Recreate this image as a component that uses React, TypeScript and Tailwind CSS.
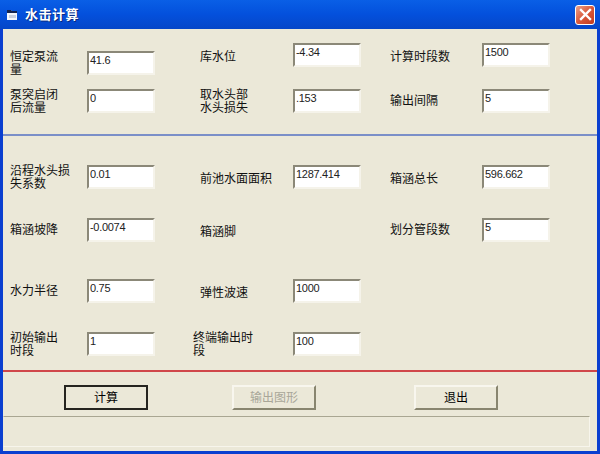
const FONT = "font-['Liberation_Sans','Noto_Sans_CJK_SC',sans-serif]";

function Field({ value }: { value: string }) {
  return (
    <div className="w-[68px] h-[24px] shrink-0 bg-white border-2 border-t-[#8b8878] border-l-[#8b8878] border-r-[#f5f3ea] border-b-[#f5f3ea] pl-[1px] text-[11px] leading-[15px] tracking-[-0.3px] text-[#222]">
      {value}
    </div>
  );
}

function Param({ label, value, width, labelClass = '' }: { label: string; value?: string; width: string; labelClass?: string }) {
  return (
    <div className="flex items-center h-[24px]">
      <div className={`${width} shrink-0 text-[12px] leading-[13px] text-[#111] whitespace-pre-line ${labelClass}`}>{label}</div>
      {value !== undefined && <Field value={value} />}
    </div>
  );
}

function Button({ text, kind }: { text: string; kind?: 'default' | 'disabled' }) {
  const frame =
    kind === 'default'
      ? 'border-2 border-[#25241f]'
      : 'border-2 border-t-[#f8f6ee] border-l-[#f8f6ee] border-r-[#88856f] border-b-[#88856f]';
  return (
    <div className={`w-[84px] h-[25px] flex items-center justify-center text-[12px] ${frame} ${kind === 'disabled' ? 'text-[#a8a698]' : 'text-black'}`}>
      {text}
    </div>
  );
}

const ROW = 'grid grid-cols-[190px_190px_1fr]';

export default function App() {
  return (
    <div className={`w-[600px] h-[454px] flex flex-col overflow-hidden bg-[#0a3fd0] ${FONT}`}>
      {/* title bar */}
      <div className="h-[29px] shrink-0 flex items-center pl-[7px] pr-[5px] bg-gradient-to-b from-[#0a5fe6] via-[#0450dc] to-[#0546c8]">
        <svg width="11" height="11" viewBox="0 0 11 11" className="shrink-0">
          <path d="M0 1h4l1 1h5v9H0z" fill="#f4f6fb" />
          <path d="M0 1h4l1 1h5v2H0z" fill="#14234f" />
          <path d="M2 6h7v3H2z" fill="#c9cfdf" />
        </svg>
        <div className="ml-[7px] text-[13px] font-bold text-white tracking-[0.5px] [text-shadow:1px_1px_0_#0a2a80]">水击计算</div>
        <div className="ml-auto w-[20px] h-[20px] rounded-[3px] border border-white bg-gradient-to-br from-[#e8a08a] via-[#d9583a] to-[#c23a1e] flex items-center justify-center">
          <svg width="13" height="13" viewBox="0 0 13 13">
            <path d="M2 2l9 9M11 2l-9 9" stroke="#fff" strokeWidth="2.4" strokeLinecap="square" />
          </svg>
        </div>
      </div>

      {/* client area */}
      <div className="flex-1 mx-[3px] mb-[3px] bg-[#ebe8d8] flex flex-col">
        <div className="flex pl-[7px] pt-[14px] h-[105px] shrink-0">
          <div className="w-[190px] flex flex-col gap-[14px] pt-[8px]">
            <Param label={'恒定泵流\n量'} value="41.6" width="w-[77px]" labelClass="translate-y-[1px]" />
            <Param label={'泵突启闭\n后流量'} value="0" width="w-[77px]" labelClass="translate-y-[1px]" />
          </div>
          <div className="w-[190px] flex flex-col gap-[22px]">
            <Param label="库水位" value="-4.34" width="w-[93px]" labelClass="translate-y-[2px]" />
            <Param label={'取水头部\n水头损失'} value=".153" width="w-[93px]" labelClass="translate-y-[1px]" />
          </div>
          <div className="flex flex-col gap-[22px]">
            <Param label="计算时段数" value="1500" width="w-[92px]" labelClass="translate-y-[2px]" />
            <Param label="输出间隔" value="5" width="w-[92px]" />
          </div>
        </div>

        <div className="h-[2px] bg-[#7a8fc8] shrink-0" />

        <div className="pl-[7px] pt-[29px] h-[234px] shrink-0 flex flex-col">
          <div className={ROW}>
            <Param label={'沿程水头损\n失系数'} value="0.01" width="w-[77px]" labelClass="translate-y-[1px]" />
            <Param label="前池水面面积" value="1287.414" width="w-[93px]" labelClass="translate-y-[2px]" />
            <Param label="箱涵总长" value="596.662" width="w-[92px]" labelClass="translate-y-[2px]" />
          </div>
          <div className={`${ROW} mt-[29px]`}>
            <Param label="箱涵坡降" value="-0.0074" width="w-[77px]" />
            <Param label="箱涵脚" width="w-[93px]" labelClass="translate-y-[2px]" />
            <Param label="划分管段数" value="5" width="w-[92px]" />
          </div>
          <div className={`${ROW} mt-[37px]`}>
            <Param label="水力半径" value="0.75" width="w-[77px]" />
            <Param label="弹性波速" value="1000" width="w-[93px]" labelClass="translate-y-[2px]" />
          </div>
          <div className={`${ROW} mt-[29px]`}>
            <Param label={'初始输出\n时段'} value="1" width="w-[77px]" labelClass="translate-y-[1px]" />
            <Param label={'终端输出时\n段'} value="100" width="w-[93px]" labelClass="-ml-[7px] mr-[7px] translate-y-[1px]" />
          </div>
        </div>

        <div className="h-[2px] bg-[#d0474a] shrink-0" />

        <div className="h-[44px] shrink-0 flex pl-[61px] pt-[13px]">
          <Button text="计算" kind="default" />
          <div className="ml-[84px]">
            <Button text="输出图形" kind="disabled" />
          </div>
          <div className="ml-[98px]">
            <Button text="退出" />
          </div>
        </div>

        <div className="h-[31px] shrink-0 mr-[7px] border border-t-[#a9a692] border-l-transparent border-r-[#f7f5ec] border-b-[#f7f5ec]" />
      </div>
    </div>
  );
}
